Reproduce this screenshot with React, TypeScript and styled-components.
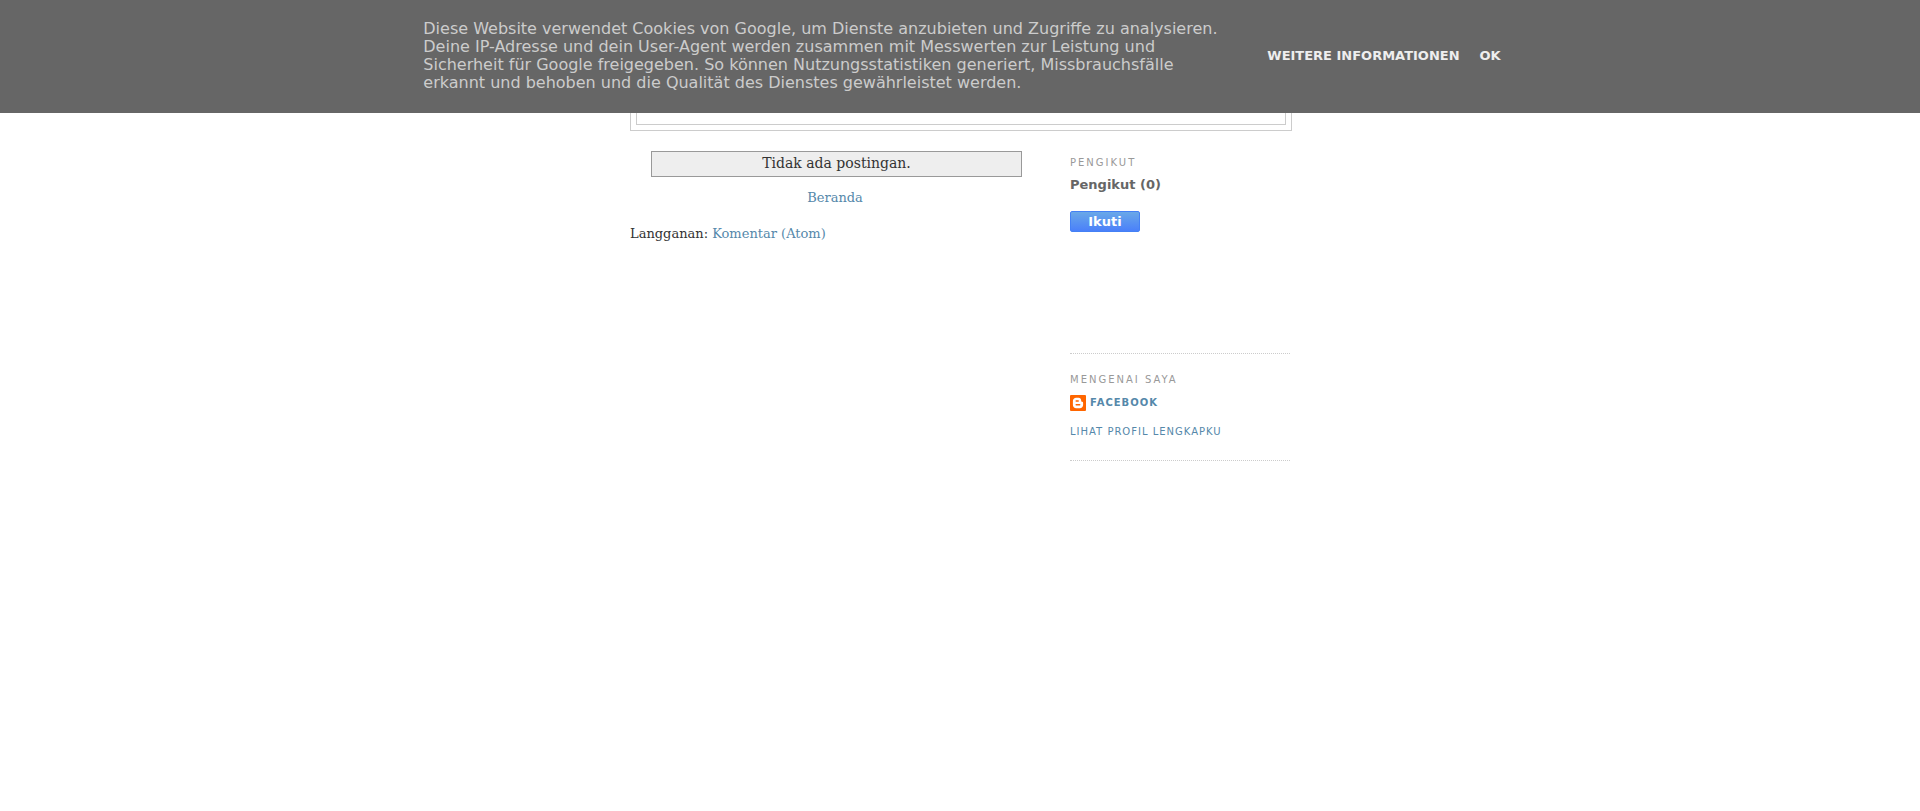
import React from "react";
import styled, { createGlobalStyle } from "styled-components";

const sans = '"DejaVu Sans", Verdana, sans-serif';
const serif = '"DejaVu Serif", Georgia, serif';

const GlobalStyle = createGlobalStyle`
  body {
    margin: 0;
    background: #fff;
    color: #333;
    font: 13px/20px ${serif};
  }
`;

const Link = styled.a`
  color: #5588aa;
  text-decoration: none;
  &:hover {
    color: #999;
  }
`;

const CookieBar = styled.div`
  position: fixed;
  inset: 0 0 auto;
  z-index: 10;
  display: flex;
  align-items: center;
  justify-content: center;
  gap: 40px;
  padding: 20px 16px 21px 20px;
  background: #666;
  font-family: ${sans};
`;

const CookieText = styled.p`
  max-width: 804px;
  margin: 0;
  color: #ccc;
  font-size: 16px;
  line-height: 18px;
`;

const CookieActions = styled.div`
  display: flex;
  gap: 20px;
  flex: none;
`;

const CookieLink = styled.a`
  color: #eee;
  font-size: 13px;
  font-weight: bold;
  line-height: 16px;
  text-decoration: none;
  text-transform: uppercase;
`;

const Page = styled.div`
  max-width: 660px;
  margin: 0 auto;
`;

const Header = styled.header`
  box-sizing: border-box;
  width: calc(100% + 2px);
  margin-top: 34px;
  padding: 5px;
  border: 1px solid #ccc;
`;

const HeaderInner = styled.div`
  min-height: 83px;
  border: 1px solid #ccc;
`;

const Columns = styled.div`
  display: flex;
  justify-content: space-between;
  padding-top: 20px;
`;

const Main = styled.main`
  width: 410px;
`;

const Status = styled.div`
  width: 90%;
  margin: 0 auto 11px 21px;
  padding-bottom: 2px;
  border: 1px solid #999;
  background: #eee;
  font-size: 14px;
  line-height: 22px;
  text-align: center;
`;

const Pager = styled.nav`
  text-align: center;
`;

const Feeds = styled.div`
  margin-top: 16px;
`;

const Sidebar = styled.aside`
  width: 220px;
  color: #666;
  font-family: ${sans};
`;

const Widget = styled.section<{ $height: number }>`
  box-sizing: border-box;
  min-height: ${(p) => p.$height}px;
  margin-bottom: 14px;
  border-bottom: 1px dotted #ccc;
`;

const WidgetTitle = styled.h2`
  margin: 0 0 5px;
  padding-top: 5px;
  color: #999;
  font-size: 10px;
  font-weight: normal;
  line-height: 14px;
  letter-spacing: 2px;
  text-transform: uppercase;
`;

const FollowerCount = styled.div`
  font-weight: bold;
  line-height: 20px;
`;

const FollowButton = styled.button`
  display: block;
  width: 70px;
  height: 21px;
  margin-top: 16px;
  padding: 0;
  border: 1px solid #4481f5;
  border-radius: 2px;
  background: linear-gradient(#69a8e8, #4a80fa);
  color: #fff;
  font: bold 13px/19px ${sans};
  cursor: pointer;
`;

const Profile = styled.div`
  display: flex;
  flex-direction: column;
  align-items: flex-start;
  gap: 13px;
  padding-top: 3px;
`;

const ProfileLink = styled(Link)<{ $strong?: boolean }>`
  display: flex;
  align-items: center;
  gap: 4px;
  font-size: 10px;
  font-weight: ${(p) => (p.$strong ? "bold" : "normal")};
  line-height: 16px;
  letter-spacing: 1px;
  text-transform: uppercase;
`;

const BloggerIcon = () => (
  <svg width="16" height="16" viewBox="0 0 16 16" fill="none" aria-hidden="true">
    <rect width="16" height="16" rx="1" fill="#ff6600" />
    <path
      fill="#fff"
      d="M6.200 2.800h2.300c1.600 0 2.700 1.200 2.700 2.700 0 1 .3 1.300 1 1.300.6 0 .9.300.9.900v2.200c0 1.900-1.400 3.300-3.200 3.300H6.200c-1.900 0-3.300-1.400-3.300-3.300V6.100c0-1.900 1.400-3.300 3.300-3.300z"
    />
    <path stroke="#ff6600" strokeWidth="1.500" strokeLinecap="round" d="M6.200 6.100h2M6.200 9.800h3.500" />
  </svg>
);

export default function App() {
  return (
    <>
      <GlobalStyle />
      <CookieBar>
        <CookieText>
          Diese Website verwendet Cookies von Google, um Dienste anzubieten und
          Zugriffe zu analysieren. Deine IP-Adresse und dein User-Agent werden
          zusammen mit Messwerten zur Leistung und Sicherheit für Google
          freigegeben. So können Nutzungsstatistiken generiert,
          Missbrauchsfälle erkannt und behoben und die Qualität des Dienstes
          gewährleistet werden.
        </CookieText>
        <CookieActions>
          <CookieLink href="#info">Weitere Informationen</CookieLink>
          <CookieLink href="#ok">Ok</CookieLink>
        </CookieActions>
      </CookieBar>
      <Page>
        <Header>
          <HeaderInner />
        </Header>
        <Columns>
          <Main>
            <Status>Tidak ada postingan.</Status>
            <Pager>
              <Link href="#beranda">Beranda</Link>
            </Pager>
            <Feeds>
              Langganan: <Link href="#atom">Komentar (Atom)</Link>
            </Feeds>
          </Main>
          <Sidebar>
            <Widget $height={203}>
              <WidgetTitle>Pengikut</WidgetTitle>
              <FollowerCount>Pengikut (0)</FollowerCount>
              <FollowButton type="button">Ikuti</FollowButton>
            </Widget>
            <Widget $height={93}>
              <WidgetTitle>Mengenai Saya</WidgetTitle>
              <Profile>
                <ProfileLink href="#facebook" $strong>
                  <BloggerIcon />
                  facebook
                </ProfileLink>
                <ProfileLink href="#profil">Lihat profil lengkapku</ProfileLink>
              </Profile>
            </Widget>
          </Sidebar>
        </Columns>
      </Page>
    </>
  );
}
